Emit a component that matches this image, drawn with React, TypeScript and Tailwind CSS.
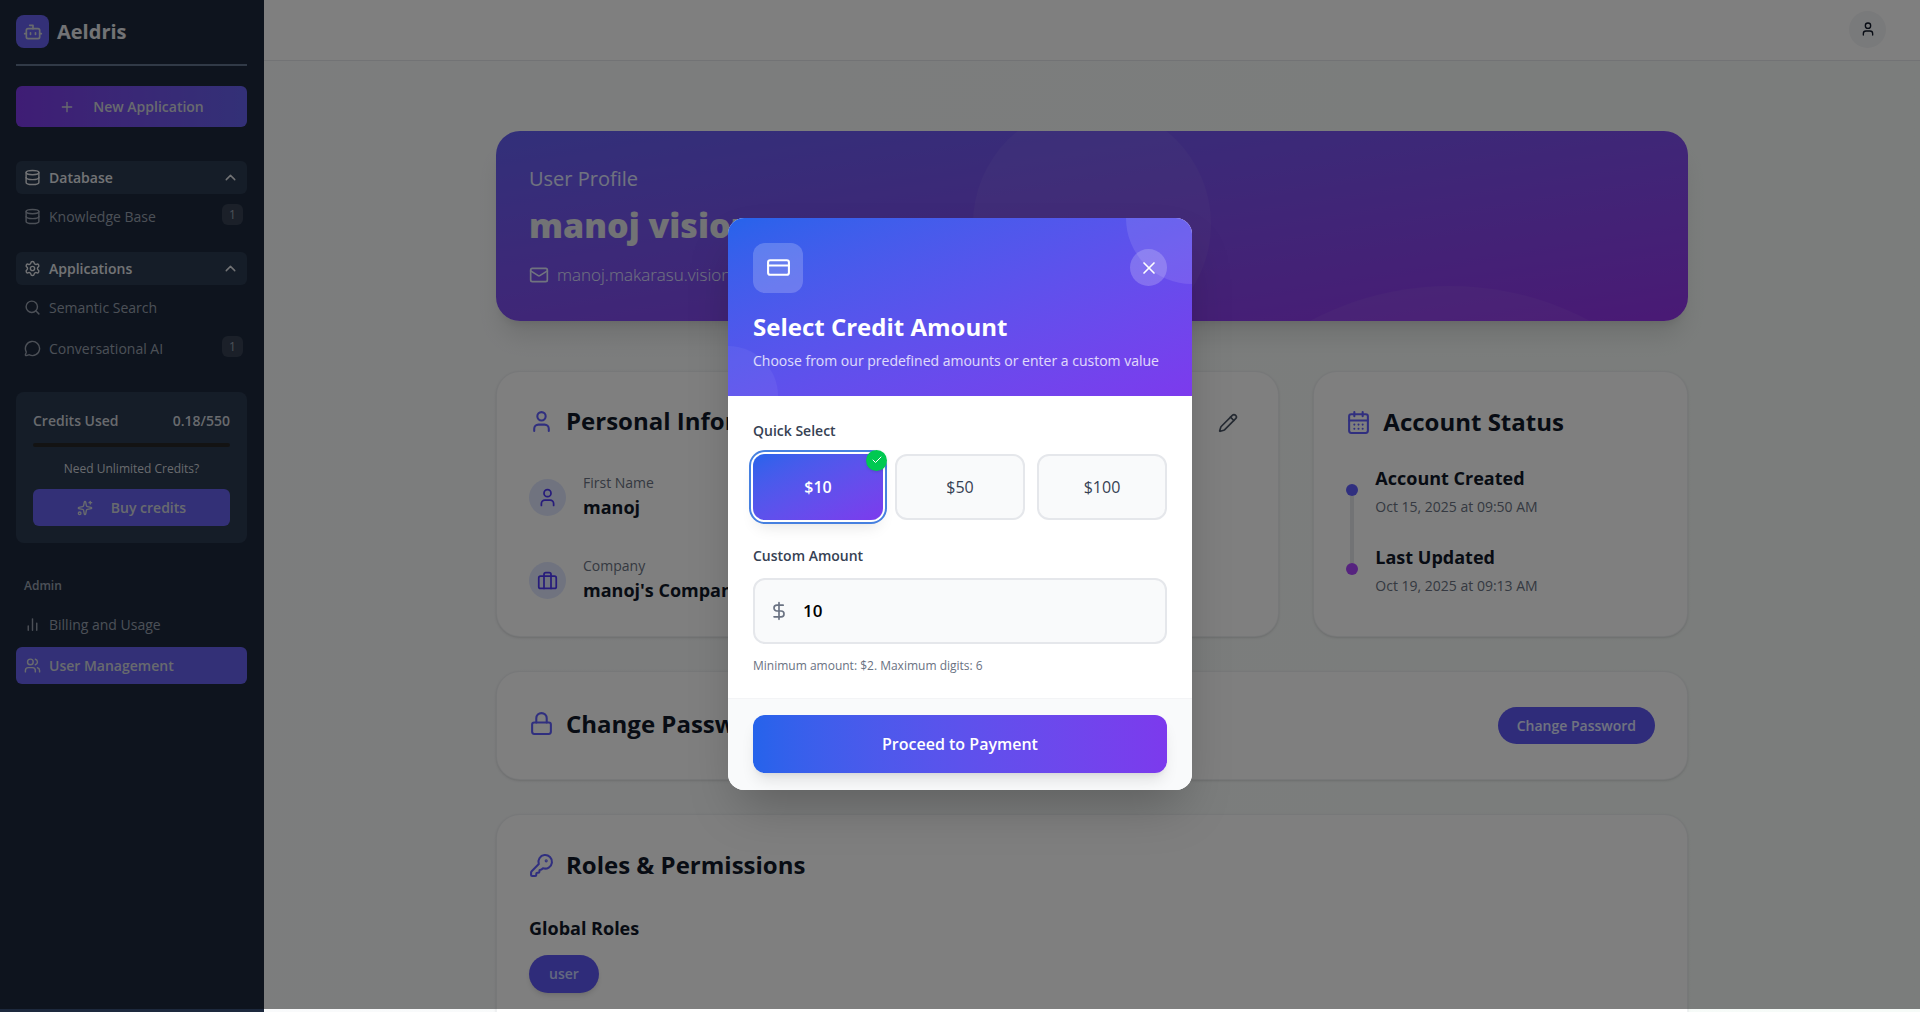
import React from "react";
import {
  Plus,
  Database,
  ChevronUp,
  Settings,
  Search,
  MessageCircle,
  Sparkles,
  Users,
  Mail,
  Pencil,
  Lock,
  CreditCard,
  X,
  Check,
  DollarSign,
} from "lucide-react";

type IconProps = { className?: string };

const svgBase = {
  viewBox: "0 0 24 24",
  fill: "none",
  stroke: "currentColor",
  strokeWidth: 2,
  strokeLinecap: "round" as const,
  strokeLinejoin: "round" as const,
  "aria-hidden": true,
};

const BotIcon = ({ className }: IconProps) => (
  <svg {...svgBase} className={className}>
    <path d="M12 8V4H8" />
    <rect width="16" height="12" x="4" y="8" rx="2" />
    <path d="M2 14h2M20 14h2M15 13v2M9 13v2" />
  </svg>
);

const PersonIcon = ({ className }: IconProps) => (
  <svg {...svgBase} className={className}>
    <path d="M19 21v-2a4 4 0 0 0-4-4H9a4 4 0 0 0-4 4v2" />
    <circle cx="12" cy="7" r="4" />
  </svg>
);

const BarsIcon = ({ className }: IconProps) => (
  <svg {...svgBase} className={className}>
    <path d="M18 20V10M12 20V4M6 20v-6" />
  </svg>
);

const CaseIcon = ({ className }: IconProps) => (
  <svg {...svgBase} className={className}>
    <rect x="2" y="7" width="20" height="14" rx="2" />
    <path d="M16 21V5a2 2 0 0 0-2-2h-4a2 2 0 0 0-2 2v16" />
  </svg>
);

const CalendarIcon = ({ className }: IconProps) => (
  <svg {...svgBase} className={className}>
    <path d="M8 2v4M16 2v4M3 10h18" />
    <rect x="3" y="4" width="18" height="18" rx="2" />
    <path d="M8 14h.01M12 14h.01M16 14h.01M8 18h.01M12 18h.01M16 18h.01" />
  </svg>
);

const KeyIcon = ({ className }: IconProps) => (
  <svg {...svgBase} className={className}>
    <path d="M2.586 17.414A2 2 0 0 0 2 18.828V21a1 1 0 0 0 1 1h3a1 1 0 0 0 1-1v-1a1 1 0 0 1 1-1h1a1 1 0 0 0 1-1v-1a1 1 0 0 1 1-1h.172a2 2 0 0 0 1.414-.586l.814-.814a6.5 6.5 0 1 0-4-4z" />
    <circle cx="16.5" cy="7.5" r=".5" fill="currentColor" />
  </svg>
);

function NavGroup({ icon, label }: { icon: React.ReactNode; label: string }) {
  return (
    <button className="flex h-[33px] w-full items-center gap-2 rounded-md bg-slate-700/70 px-2 text-left font-semibold text-gray-200">
      {icon}
      <span className="flex-1">{label}</span>
      <ChevronUp className="size-[17px]" />
    </button>
  );
}

function NavItem({
  icon,
  label,
  badge,
  active,
}: {
  icon: React.ReactNode;
  label: string;
  badge?: string;
  active?: boolean;
}) {
  return (
    <a
      href="#"
      className={
        active
          ? "flex h-[37px] items-center gap-2 rounded-md bg-[#6661ee] px-2 font-semibold text-gray-300"
          : "flex h-[37px] items-center gap-2 rounded-md px-2 text-gray-400"
      }
    >
      {icon}
      <span className="flex-1">{label}</span>
      {badge && (
        <span className="-mr-1 mb-1 flex size-[21px] items-center justify-center rounded-md bg-gray-700 text-xs font-medium text-gray-400">
          {badge}
        </span>
      )}
    </a>
  );
}

function Sidebar() {
  return (
    <aside className="flex w-[264px] shrink-0 flex-col bg-slate-800 pt-[15px] pr-[17px] pl-4 text-sm">
      <div className="flex items-center gap-2 pb-4">
        <span className="flex size-[33px] items-center justify-center rounded-lg bg-[#6661ee] text-gray-300">
          <BotIcon className="size-5" />
        </span>
        <span className="text-xl font-bold text-gray-200">Aeldris</span>
      </div>
      <hr className="border-t-2 border-slate-500" />
      <button className="mt-5 flex h-[41px] items-center justify-center gap-[18px] rounded-md bg-linear-to-r from-[#7e3aea] to-[#6661ee] font-semibold text-gray-300">
        <Plus className="size-4" />
        New Application
      </button>
      <nav className="mt-[34px] flex flex-col gap-1">
        <NavGroup icon={<Database className="size-[17px]" />} label="Database" />
        <NavItem icon={<Database className="size-[17px]" />} label="Knowledge Base" badge="1" />
        <div className="h-[9px]" />
        <NavGroup icon={<Settings className="size-[17px]" />} label="Applications" />
        <NavItem icon={<Search className="size-[17px]" />} label="Semantic Search" />
        <NavItem icon={<MessageCircle className="size-[17px]" />} label="Conversational AI" badge="1" />
      </nav>
      <section className="mt-[25px] flex h-[151px] flex-col rounded-lg bg-slate-700/70 px-[17px] pt-[19px]">
        <div className="flex justify-between font-semibold text-gray-300">
          <span>Credits Used</span>
          <span>0.18/550</span>
        </div>
        <div className="mt-3 h-1 rounded-full bg-neutral-800" />
        <p className="mt-3 text-center text-xs leading-5 text-gray-300">Need Unlimited Credits?</p>
        <button className="mt-[10px] flex h-[37px] items-center justify-center gap-[18px] rounded-md bg-[#6661ee] font-semibold text-gray-300">
          <Sparkles className="size-4" />
          Buy credits
        </button>
      </section>
      <p className="mt-[33px] px-2 text-xs leading-5 font-semibold text-gray-400">Admin</p>
      <nav className="mt-[10px] flex flex-col gap-1">
        <NavItem icon={<BarsIcon className="size-[17px]" />} label="Billing and Usage" />
        <NavItem icon={<Users className="size-[17px]" />} label="User Management" active />
      </nav>
    </aside>
  );
}

const card = "rounded-3xl border border-gray-200/60 bg-white px-8 shadow-sm";
const cardTitle = "flex items-center gap-3 text-2xl font-bold text-gray-900";
const itemTitle = "text-lg leading-7 font-bold text-gray-900";

function InfoRow({ icon, label, value }: { icon: React.ReactNode; label: string; value: string }) {
  return (
    <div className="flex items-center gap-[17px]">
      <span className="flex size-[37px] items-center justify-center rounded-full bg-indigo-100 text-indigo-600">
        {icon}
      </span>
      <div>
        <p className="text-sm leading-5 font-medium text-gray-500">{label}</p>
        <p className={itemTitle}>{value}</p>
      </div>
    </div>
  );
}

function Profile() {
  return (
    <main className="mx-auto flex w-full max-w-[1192px] flex-col gap-[34px] pt-[70px]">
      <section className="relative mb-4 h-[190px] overflow-hidden rounded-3xl bg-linear-to-br from-[#6460f4] to-[#9333ea] px-[33px] pt-8 shadow-xl">
        <div className="absolute -top-[26px] left-[40%] aspect-square w-1/5 rounded-full bg-white/5" />
        <div className="absolute top-[155px] -right-[5%] aspect-square w-1/2 rounded-full bg-white/5" />
        <p className="text-xl leading-8 font-medium text-indigo-100">User Profile</p>
        <h1 className="mt-2 text-[34px] leading-[44px] font-extrabold text-gray-200">manoj vision</h1>
        <p className="mt-3 flex items-center gap-2 text-[17px] leading-8 font-light text-indigo-100">
          <Mail className="size-5" />
          manoj.makarasu.vision@gmail.com
        </p>
      </section>
      <div className="grid grid-cols-3 gap-[34px]">
        <section className={`${card} col-span-2 h-[266px] pt-[33px]`}>
          <div className="flex items-start justify-between">
            <h2 className={cardTitle}>
              <PersonIcon className="size-[25px] text-indigo-500" />
              Personal Information
            </h2>
            <button aria-label="Edit personal information" className="p-2 text-gray-600">
              <Pencil className="size-5" />
            </button>
          </div>
          <div className="mt-8 flex flex-col gap-[35px]">
            <InfoRow icon={<PersonIcon className="size-[21px]" />} label="First Name" value="manoj" />
            <InfoRow icon={<CaseIcon className="size-[21px]" />} label="Company" value="manoj's Company" />
          </div>
        </section>
        <section className={`${card} h-[266px] pt-[34px]`}>
          <h2 className={cardTitle}>
            <CalendarIcon className="size-[25px] text-indigo-500" />
            Account Status
          </h2>
          <div className="mt-[26px] flex gap-[17px]">
            <div className="flex w-3 flex-col items-center pt-5">
              <span className="size-3 rounded-full bg-indigo-500" />
              <span className="h-[67px] w-1 bg-gray-200" />
              <span className="size-3 rounded-full bg-purple-500" />
            </div>
            <dl className="text-sm text-gray-500">
              <dt className={itemTitle}>Account Created</dt>
              <dd className="mt-[5px] mb-[26px] leading-5">Oct 15, 2025 at 09:50 AM</dd>
              <dt className={itemTitle}>Last Updated</dt>
              <dd className="mt-[5px] leading-5">Oct 19, 2025 at 09:13 AM</dd>
            </dl>
          </div>
        </section>
      </div>
      <section className={`${card} flex h-[109px] items-center justify-between`}>
        <h2 className={`${cardTitle} pb-1`}>
          <Lock className="size-[25px] text-indigo-500" />
          Change Password
        </h2>
        <button className="h-[37px] rounded-full bg-[#5f58f5] px-[19px] text-sm font-semibold text-indigo-100">
          Change Password
        </button>
      </section>
      <section className={`${card} h-[300px] pt-[34px]`}>
        <h2 className={cardTitle}>
          <KeyIcon className="size-[25px] text-indigo-500" />
          Roles &amp; Permissions
        </h2>
        <h3 className={`${itemTitle} mt-[33px]`}>Global Roles</h3>
        <span className="mt-[13px] inline-flex h-[38px] items-center rounded-full bg-[#5f58f5] px-5 text-sm font-semibold text-indigo-200 shadow-md">
          user
        </span>
      </section>
    </main>
  );
}

function CreditDialog() {
  return (
    <div
      role="dialog"
      aria-labelledby="credit-title"
      className="w-[464px] overflow-hidden rounded-2xl bg-white shadow-2xl"
    >
      <header className="relative h-[178px] overflow-hidden bg-linear-to-br from-[#2563eb] to-[#7c3aed] px-[25px] pt-[25px] text-white">
        <div className="absolute -top-[66px] -right-[66px] size-[132px] rounded-full bg-white/10" />
        <div className="absolute -bottom-[50px] -left-[50px] size-[100px] rounded-full bg-white/5" />
        <div className="relative flex items-center justify-between">
          <span className="flex size-[50px] items-center justify-center rounded-xl bg-white/20">
            <CreditCard className="size-[25px]" />
          </span>
          <button aria-label="Close" className="flex size-[37px] items-center justify-center rounded-full bg-white/20">
            <X className="size-5" />
          </button>
        </div>
        <h2 id="credit-title" className="mt-[17px] text-2xl leading-[34px] font-bold">
          Select Credit Amount
        </h2>
        <p className="mt-[5px] text-sm leading-6 text-white/80">
          Choose from our predefined amounts or enter a custom value
        </p>
      </header>
      <div className="px-[25px] pt-[25px] pb-[22px]">
        <p className="text-sm leading-5 font-semibold text-gray-700">Quick Select</p>
        <div className="mt-[13px] grid grid-cols-3 gap-3 font-medium text-gray-700">
          <button className="relative h-[66px] rounded-xl bg-linear-to-br from-[#2563eb] to-[#7c3aed] font-semibold text-white shadow-lg ring-2 ring-[#4680e0] ring-offset-2">
            $10
            <span className="absolute -top-1 -right-1 flex size-[21px] items-center justify-center rounded-full bg-green-500 shadow">
              <Check className="size-3" />
            </span>
          </button>
          <button className="h-[66px] rounded-xl border-2 border-gray-200 bg-gray-50">$50</button>
          <button className="h-[66px] rounded-xl border-2 border-gray-200 bg-gray-50">$100</button>
        </div>
        <label htmlFor="amount" className="mt-[26px] block text-sm leading-5 font-semibold text-gray-700">
          Custom Amount
        </label>
        <div className="mt-3 flex h-[66px] items-center gap-[14px] rounded-xl border-2 border-gray-200 bg-gray-50 px-[14px]">
          <DollarSign className="size-5 text-gray-500" />
          <input
            id="amount"
            defaultValue="10"
            className="min-w-0 flex-1 bg-transparent text-[17px] font-semibold text-black outline-none"
          />
        </div>
        <p className="mt-3 text-xs leading-5 text-gray-500">Minimum amount: $2. Maximum digits: 6</p>
      </div>
      <footer className="border-t border-gray-100 bg-gray-50 px-[25px] pt-4 pb-[17px]">
        <button className="h-[58px] w-full rounded-xl bg-linear-to-r from-[#2563eb] to-[#7c3aed] font-semibold text-white shadow-lg">
          Proceed to Payment
        </button>
      </footer>
    </div>
  );
}

export default function App() {
  return (
    <div className="relative flex h-screen overflow-hidden font-['Open_Sans','Noto_Sans',sans-serif]">
      <Sidebar />
      <div className="flex min-w-0 flex-1 flex-col bg-linear-to-r from-gray-50 to-[#f6fbf8]">
        <header className="flex h-[61px] shrink-0 items-center justify-end border-b border-gray-200 bg-white px-[34px] pb-0.5">
          <button
            aria-label="Account"
            className="flex size-[37px] items-center justify-center rounded-full bg-gray-100 text-gray-900"
          >
            <PersonIcon className="size-4" />
          </button>
        </header>
        <Profile />
      </div>
      <div className="absolute inset-x-0 top-0 bottom-[3px] flex items-center justify-center bg-black/50 pb-0.5">
        <CreditDialog />
      </div>
    </div>
  );
}
